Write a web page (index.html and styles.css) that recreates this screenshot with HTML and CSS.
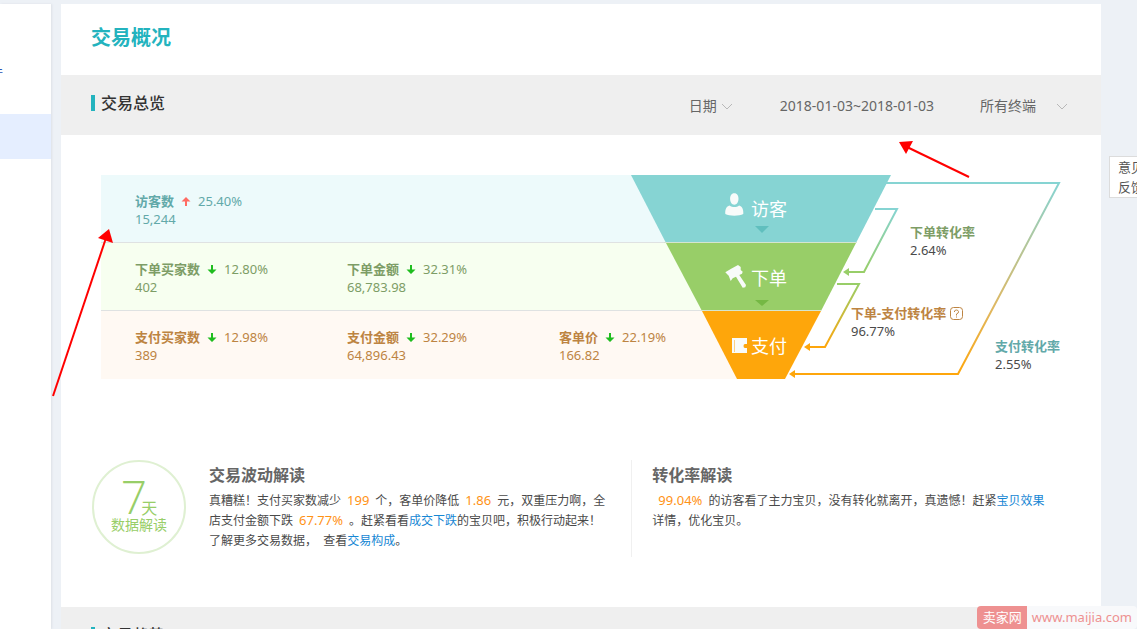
FILE: index.html
```html
<!DOCTYPE html>
<html lang="zh-CN">
<head>
<meta charset="utf-8">
<title>交易概况</title>
<link rel="stylesheet" href="styles.css">
</head>
<body>
<div class="layout">
  <nav class="sidebar">
    <a class="side-item" href="#">件</a>
    <a class="side-item side-active" href="#" aria-label="交易概况"></a>
  </nav>
  <main class="main">
    <h1 class="page-title">交易概况</h1>
    <section>
      <header class="bar">
        <h2 class="bar-title">交易总览</h2>
        <div class="filters">
          <button class="filter" type="button">日期<svg class="chevron" viewBox="0 0 12 7"><path d="M1 1l5 5 5-5"/></svg></button>
          <span class="range">2018-01-03~2018-01-03</span>
          <button class="filter terminal" type="button">所有终端<svg class="chevron" viewBox="0 0 12 7"><path d="M1 1l5 5 5-5"/></svg></button>
        </div>
      </header>
      <div class="board">
        <div class="bands">
          <div class="band visit">
            <div class="metric"><div class="metric-head"><b>访客数</b><svg class="trend up" viewBox="0 0 10 10"><path d="M5 1l4.500 4.500H6V10H4V5.500H.5z"/></svg><span>25.40%</span></div><div>15,244</div></div>
          </div>
          <div class="band order">
            <div class="metric"><div class="metric-head"><b>下单买家数</b><svg class="trend down" viewBox="0 0 10 10"><path d="M5 10l4.500-4.500H6V1H4v4.500H.5z"/></svg><span>12.80%</span></div><div>402</div></div>
            <div class="metric"><div class="metric-head"><b>下单金额</b><svg class="trend down" viewBox="0 0 10 10"><path d="M5 10l4.500-4.500H6V1H4v4.500H.5z"/></svg><span>32.31%</span></div><div>68,783.98</div></div>
          </div>
          <div class="band pay">
            <div class="metric"><div class="metric-head"><b>支付买家数</b><svg class="trend down" viewBox="0 0 10 10"><path d="M5 10l4.500-4.500H6V1H4v4.500H.5z"/></svg><span>12.98%</span></div><div>389</div></div>
            <div class="metric"><div class="metric-head"><b>支付金额</b><svg class="trend down" viewBox="0 0 10 10"><path d="M5 10l4.500-4.500H6V1H4v4.500H.5z"/></svg><span>32.29%</span></div><div>64,896.43</div></div>
            <div class="metric"><div class="metric-head"><b>客单价</b><svg class="trend down" viewBox="0 0 10 10"><path d="M5 10l4.500-4.500H6V1H4v4.500H.5z"/></svg><span>22.19%</span></div><div>166.82</div></div>
          </div>
        </div>
        <div class="funnel">
          <svg class="funnel-art" viewBox="0 0 430 204">
            <defs>
              <linearGradient id="g-all" gradientUnits="userSpaceOnUse" x1="0" y1="8" x2="0" y2="199"><stop offset="0" stop-color="#86d4d3"/><stop offset=".65" stop-color="#dfb862"/><stop offset="1" stop-color="#fea60b"/></linearGradient>
              <linearGradient id="g-order" gradientUnits="userSpaceOnUse" x1="0" y1="34" x2="0" y2="97"><stop offset="0" stop-color="#86d4d3"/><stop offset="1" stop-color="#98ce68"/></linearGradient>
              <linearGradient id="g-pay" gradientUnits="userSpaceOnUse" x1="0" y1="109" x2="0" y2="172"><stop offset="0" stop-color="#98ce68"/><stop offset="1" stop-color="#fea60b"/></linearGradient>
            </defs>
            <path fill="#86d4d3" d="M0 0H260L225 68H35z"/>
            <path fill="#98ce68" d="M35 68H225L190 136H71z"/>
            <path fill="#fea60b" d="M71 136H190L154 204H106z"/>
            <path stroke="#d5e5d0" d="M33 67.500H226M70 135.500H190"/>
            <g fill="none" stroke-width="2">
              <path stroke="url(#g-all)" d="M255 8H428L327 199H162"/>
              <path stroke="url(#g-order)" d="M244 34H266L233 97H217"/>
              <path stroke="url(#g-pay)" d="M206 109H228L194 172H178"/>
            </g>
            <path fill="#98ce68" d="M212 97l6-4v8z"/>
            <path fill="#fea60b" d="M173 172l6-4v8zM158 199l6-4v8z"/>
            <path fill="#60bfbe" d="M124 51h14l-7 7z"/>
            <path fill="#75b844" d="M124 125h14l-7 6z"/>
            <g fill="#f8fbfa">
              <path d="M103.300 18.300c3 0 4.200 2.500 4.200 5.500s-1.700 6-4.200 6-4.200-3-4.200-6 1.200-5.500 4.200-5.500zM98.500 30.500c3 2 7 2 9.600 0 3 1 4.500 3.500 4.200 8.500-4 2.200-14 2.200-18 0-.3-5 1.200-7.500 4.200-8.500z"/>
              <path d="M94.300 97.300l5.400-3.300 7.300-4 2.700 2v3l2 1.700-.7 2-2.700 1.300 6.700 10-.7 2.300-2.600.4-6.700-11-3.300 1.600-2 2.700-2-5.300z"/>
              <path d="M101 163h15v6h-2q-1.500 0-1.500 2t1.500 2h2v5h-15z"/>
            </g>
            <path fill="none" stroke="#fbd087" d="M103.500 165v12"/>
            <g class="stage">
              <text x="120" y="41">访客</text>
              <text x="120" y="110">下单</text>
              <text x="120" y="178">支付</text>
            </g>
          </svg>
          <div class="rate rate-order"><b>下单转化率</b><div>2.64%</div></div>
          <div class="rate rate-pay"><b>下单-支付转化率<svg class="help" viewBox="0 0 13 13"><rect x=".5" y=".5" width="12" height="12" rx="3"/><path d="M4.500 5V4q.5-1 2-1t2 1.500-2 2.500v1.500M6.500 9.500v1"/></svg></b><div>96.77%</div></div>
          <div class="rate rate-all"><b>支付转化率</b><div>2.55%</div></div>
        </div>
      </div>
      <div class="insights">
        <div class="badge"><div class="badge-days"><span class="seven">7</span>天</div><div>数据解读</div></div>
        <article class="insight">
          <h3>交易波动解读</h3>
          <p>真糟糕！支付买家数减少<em>199</em>个，客单价降低<em>1.86</em>元，双重压力啊，全店支付金额下跌<em>67.77%</em>。赶紧看看<a href="#">成交下跌</a>的宝贝吧，积极行动起来！</p>
          <p>了解更多交易数据，&nbsp; 查看<a href="#">交易构成</a>。</p>
        </article>
        <article class="insight second">
          <h3>转化率解读</h3>
          <p><em>99.04%</em>的访客看了主力宝贝，没有转化就离开，真遗憾！赶紧<a href="#">宝贝效果</a>详情，优化宝贝。</p>
        </article>
      </div>
    </section>
    <section class="bar">
      <h2 class="bar-title">交易趋势</h2>
    </section>
  </main>
</div>
<svg class="pointer pointer-left" viewBox="0 0 60 170"><path stroke="#f00" stroke-width="2" d="M2 168L55 10"/><path fill="#f00" d="M58 1l4 14-15-5z"/></svg>
<svg class="pointer pointer-right" viewBox="0 0 72 40"><path stroke="#f00" stroke-width="2" d="M70 37L8 7"/><path fill="#f00" d="M0 2l14-1-7 13z"/></svg>
<button class="feedback" type="button">意见<br>反馈</button>
<div class="watermark"><span class="mark-name">卖家网</span><span class="mark-url">www.maijia.com</span></div>
</body>
</html>
```
FILE: styles.css
```css
* { box-sizing: border-box; }
body {
  margin: 0;
  position: relative;
  height: 100vh;
  overflow: hidden;
  background: #edf1f6;
  color: #4a4a4a;
  font: 13px/18px "Noto Sans", "Noto Sans CJK SC", sans-serif;
}
h1, h2, h3, p { margin: 0; }
a { color: #1787d4; text-decoration: none; }
button { margin: 0; padding: 0; border: 0; background: none; color: inherit; font: inherit; }
.layout {
  display: flex;
  gap: 10px;
  height: 100vh;
  overflow: hidden;
  padding: 4px 36px 0 0;
}
.sidebar {
  flex: 0 0 51px;
  padding-top: 46px;
  overflow: hidden;
  background: #fff;
  box-shadow: 1px 0 2px #dde1e6;
}
.side-item {
  display: block;
  height: 64px;
  font-size: 12px;
  line-height: 45px;
  text-indent: -9px;
  color: #2b55b5;
}
.side-active { height: 45px; background: #e5eeff; }
.main { flex: 1; min-width: 0; background: #fff; }
.page-title {
  padding: 19px 30px 22px;
  font-size: 20px;
  line-height: 30px;
  color: #23b3be;
}
.bar {
  display: flex;
  justify-content: space-between;
  height: 60px;
  padding: 20px 33px 0 30px;
  background: #efefef;
}
.bar-title {
  height: 16px;
  padding-left: 6px;
  border-left: 4px solid #23b3be;
  font-size: 16px;
  font-weight: 500;
  line-height: 16px;
  color: #333;
}
.filters {
  display: flex;
  align-items: center;
  height: 22px;
  gap: 43px;
  font-size: 14px;
  color: #666;
}
.filter { display: flex; align-items: center; gap: 4px; }
.filter.terminal { gap: 20px; }
.range { padding: 0 3px 0 4px; }
.chevron { width: 12px; height: 7px; fill: none; stroke: #b8b8b8; }
.board {
  display: grid;
  grid-template-columns: minmax(0, 1fr) 430px;
  padding: 40px 40px 0;
}
.bands { margin-right: -119px; }
.band {
  display: flex;
  height: 68px;
  padding: 17px 0 0 34px;
  border-bottom: 1px solid #dfe2e2;
}
.band.pay { border-bottom: 0; }
.metric { flex: 0 0 212px; }
.metric-head { display: flex; align-items: center; gap: 7px; }
.trend { width: 10px; height: 10px; }
.up { fill: #ff6b62; }
.down { fill: #1fbd1f; }
.visit { background: #edfafb; color: #62a9a9; }
.order { background: #f7fff0; color: #7d9d66; }
.pay { background: #fff9f3; color: #bd8442; }
.funnel { position: relative; }
.funnel-art { display: block; width: 430px; height: 204px; }
.stage { fill: #fff; font-size: 18px; }
.rate { position: absolute; white-space: nowrap; }
.rate-order { left: 279px; top: 48px; }
.rate-pay { left: 220px; top: 129px; }
.rate-all { left: 364px; top: 162px; }
.rate-order b { color: #7d9d66; }
.rate-pay b { display: flex; align-items: center; gap: 4px; color: #bd8442; }
.rate-all b { color: #62a9a9; }
.help { width: 13px; height: 13px; fill: none; stroke: #bd8442; }
.insights {
  display: grid;
  grid-template-columns: 94px 18fr 17fr;
  padding: 81px 49px 50px 31px;
}
.badge {
  width: 94px;
  height: 94px;
  padding-top: 14px;
  border: 2px solid #dff0d2;
  border-radius: 50%;
  text-align: center;
  font-size: 14px;
  color: #98ce68;
}
.badge-days { height: 40px; font-size: 16px; line-height: 40px; }
.seven { margin-right: -6px; font-family: "Open Sans", sans-serif; font-size: 46px; font-weight: 300; }
.insight {
  height: 97px;
  padding: 4px 22px 0 23px;
  font-size: 12px;
  line-height: 20px;
}
.insight.second { padding: 4px 0 0 20px; border-left: 1px solid #f0f0f0; }
.insight h3 { margin-bottom: 5px; font-size: 16px; line-height: 22px; font-weight: 700; color: #666; }
.insight em { margin: 0 6px; font-size: 13px; line-height: 1; font-style: normal; color: #ff9215; }
.pointer { position: absolute; overflow: visible; }
.pointer-left { left: 51px; top: 228px; width: 60px; height: 170px; }
.pointer-right { left: 899px; top: 140px; width: 72px; height: 40px; }
.feedback {
  position: absolute;
  top: 156px;
  right: -15px;
  padding: 0 7px 0 8px;
  border: 1px solid #dcdcdc;
  background: #fff;
  line-height: 20px;
  color: #555;
}
.watermark {
  position: absolute;
  right: 0;
  bottom: 0;
  display: flex;
  line-height: 23px;
  border-radius: 4px;
  overflow: hidden;
}
.mark-name { padding: 0 5px 0 6px; background: #ee9191; color: #fff; }
.mark-url { padding: 0 5px; background: #f8f9fb; color: #ee9191; }
```
